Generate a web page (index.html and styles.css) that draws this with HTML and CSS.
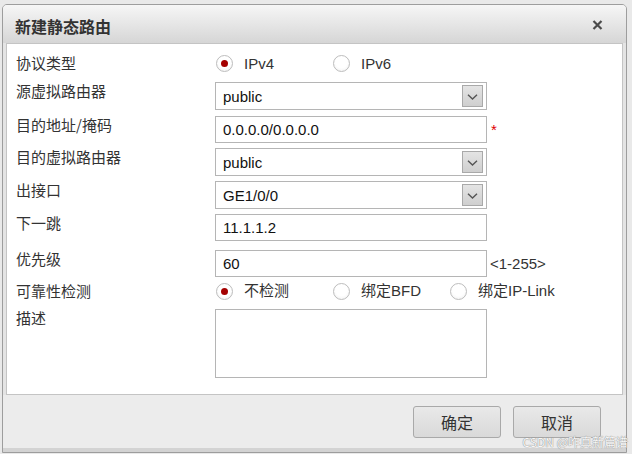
FILE: index.html
```html
<!DOCTYPE html>
<html>
<head>
<meta charset="utf-8">
<link rel="stylesheet" href="styles.css">
</head>
<body>
<div class="dialog">
  <div class="titlebar">
    <span class="title">新建静态路由</span>
    <svg class="close" width="11" height="10" viewBox="0 0 11 10"><path d="M1.5 1 L9.5 9 M9.5 1 L1.5 9" stroke="#4a4a4a" stroke-width="2.2" fill="none"/></svg>
  </div>
  <div class="panel">
    <div class="row r-radio r1">
      <div class="label">协议类型</div>
      <div class="radios">
        <label class="opt"><span class="radio checked"></span><span class="lat">IPv4</span></label>
        <label class="opt"><span class="radio"></span><span class="lat">IPv6</span></label>
      </div>
    </div>
    <div class="row r2">
      <div class="label">源虚拟路由器</div>
      <div class="select"><span class="val">public</span><span class="drop"><svg width="11" height="6" viewBox="0 0 11 6"><path d="M1 0.8 L5.5 5 L10 0.8" stroke="#555" stroke-width="1.4" fill="none"/></svg></span></div>
    </div>
    <div class="row r3">
      <div class="label">目的地址/掩码</div>
      <div class="input"><span class="val">0.0.0.0/0.0.0.0</span></div>
      <span class="star">*</span>
    </div>
    <div class="row r4">
      <div class="label">目的虚拟路由器</div>
      <div class="select"><span class="val">public</span><span class="drop"><svg width="11" height="6" viewBox="0 0 11 6"><path d="M1 0.8 L5.5 5 L10 0.8" stroke="#555" stroke-width="1.4" fill="none"/></svg></span></div>
    </div>
    <div class="row r5">
      <div class="label">出接口</div>
      <div class="select"><span class="val">GE1/0/0</span><span class="drop"><svg width="11" height="6" viewBox="0 0 11 6"><path d="M1 0.8 L5.5 5 L10 0.8" stroke="#555" stroke-width="1.4" fill="none"/></svg></span></div>
    </div>
    <div class="row r6">
      <div class="label">下一跳</div>
      <div class="input"><span class="val">11.1.1.2</span></div>
    </div>
    <div class="row r7">
      <div class="label">优先级</div>
      <div class="input"><span class="val">60</span></div>
      <span class="hint">&lt;1-255&gt;</span>
    </div>
    <div class="row r-radio r8">
      <div class="label">可靠性检测</div>
      <div class="radios">
        <label class="opt"><span class="radio checked"></span><span class="cjk">不检测</span></label>
        <label class="opt"><span class="radio"></span><span class="cjk">绑定BFD</span></label>
        <label class="opt"><span class="radio"></span><span class="cjk">绑定IP-Link</span></label>
      </div>
    </div>
    <div class="row r9">
      <div class="label">描述</div>
      <div class="textarea"></div>
    </div>
  </div>
  <div class="footer">
    <button class="btn">确定</button>
    <button class="btn">取消</button>
  </div>
  <div class="watermark">CSDN @咋真新篇谱</div>
</div>
</body>
</html>
```

FILE: styles.css
```css
html, body {
  margin: 0;
  padding: 0;
}
body {
  width: 632px;
  height: 454px;
  background: #e9e9e9;
  font-family: "Liberation Sans", "Noto Sans CJK SC", sans-serif;
  overflow: hidden;
}
.dialog {
  position: relative;
  box-sizing: border-box;
  width: 625px;
  height: 449px;
  margin: 4px 0 0 2px;
  border: 1px solid #9d9d9d;
  border-radius: 5px 5px 0 0;
  background: #e4e4e4;
  display: flex;
  flex-direction: column;
}
.titlebar {
  height: 38px;
  display: flex;
  align-items: center;
  justify-content: space-between;
  padding: 0 23px 0 12px;
  background: linear-gradient(#f6f6f6, #d6d6d6);
  border-radius: 4px 4px 0 0;
}
.title {
  font-family: "Noto Sans CJK SC", sans-serif;
  font-weight: bold;
  font-size: 16px;
  color: #333;
  line-height: 20px;
  margin-top: 3px;
}
.close {
  display: block;
  margin-top: 2px;
}
.panel {
  box-sizing: border-box;
  height: 352px;
  margin: 0 3px;
  border: 1px solid #c4c4c4;
  background: #fff;
  padding: 9px 0 0 9px;
}
.row {
  display: flex;
  align-items: flex-start;
}
.label {
  width: 199px;
  flex: none;
  font-family: "Noto Sans CJK SC", sans-serif;
  font-size: 15px;
  line-height: 18px;
  color: #333;
}
.r-radio {
  height: 20px;
  align-items: center;
}
.r1 .label { margin-top: -1px; }
.r2 { margin-top: 9px; }
.r3 { margin-top: 6px; }
.r4 { margin-top: 5px; }
.r5 { margin-top: 5px; }
.r6 { margin-top: 5px; }
.r7 { margin-top: 9px; }
.r8 { margin-top: 4px; }
.r9 { margin-top: 8px; }
.radios {
  display: flex;
  margin-left: 1px;
}
.opt {
  width: 117px;
  display: flex;
  align-items: center;
  gap: 11px;
  font-size: 15px;
  color: #333;
}
.opt .lat {
  font-family: "Liberation Sans", sans-serif;
}
.opt .cjk {
  font-family: "Liberation Sans", "Noto Sans CJK SC", sans-serif;
  line-height: 18px;
}
.radio {
  box-sizing: border-box;
  width: 17px;
  height: 17px;
  border-radius: 50%;
  border: 1px solid #bdbdbd;
  background: radial-gradient(circle at 50% 40%, #ffffff 50%, #ececec 100%);
  display: flex;
  align-items: center;
  justify-content: center;
  flex: none;
}
.radio.checked::after {
  content: "";
  width: 7px;
  height: 7px;
  border-radius: 50%;
  background: #a40000;
}
.select, .input, .textarea {
  box-sizing: border-box;
  width: 272px;
  border: 1px solid #b5b5b5;
  background: #fff;
  flex: none;
}
.select {
  height: 28px;
  display: flex;
  align-items: center;
  justify-content: space-between;
  padding: 0 3px 0 7px;
}
.input {
  height: 27px;
  display: flex;
  align-items: center;
  padding-left: 7px;
}
.val {
  font-size: 15px;
  color: #111;
}
.drop {
  box-sizing: border-box;
  width: 21px;
  height: 22px;
  border: 1px solid #a9a9a9;
  background: linear-gradient(#e4e4e4, #cfcfcf);
  display: flex;
  align-items: center;
  justify-content: center;
}
.drop svg { display: block; margin-top: 1px; }
.star {
  color: #e00000;
  font-size: 15px;
  margin-left: 4px;
  line-height: 20px;
  margin-top: 4px;
}
.hint {
  font-size: 15px;
  color: #333;
  margin-left: 3px;
  align-self: center;
}
.textarea {
  height: 69px;
}
.footer {
  flex: 1;
  display: flex;
  justify-content: flex-end;
  align-items: flex-start;
  gap: 12px;
  padding: 11px 25px 0 0;
  background: #ececec;
  box-shadow: inset 0 -4px 0 #d3d3d3;
}
.btn {
  box-sizing: border-box;
  width: 88px;
  height: 32px;
  border: 1px solid #a9a9a9;
  border-radius: 3px;
  background: linear-gradient(#e9e9e9, #d9d9d9);
  font-family: "Noto Sans CJK SC", sans-serif;
  font-size: 16px;
  color: #333;
  padding: 0;
  line-height: 30px;
}
.watermark {
  position: absolute;
  right: -2px;
  bottom: 3px;
  font-family: "Noto Sans CJK SC", sans-serif;
  font-size: 12px;
  line-height: 14px;
  color: #f7f7f7;
  text-shadow: 0 0 1px #8a8a8a, 0 0 1px #8a8a8a;
}
```
